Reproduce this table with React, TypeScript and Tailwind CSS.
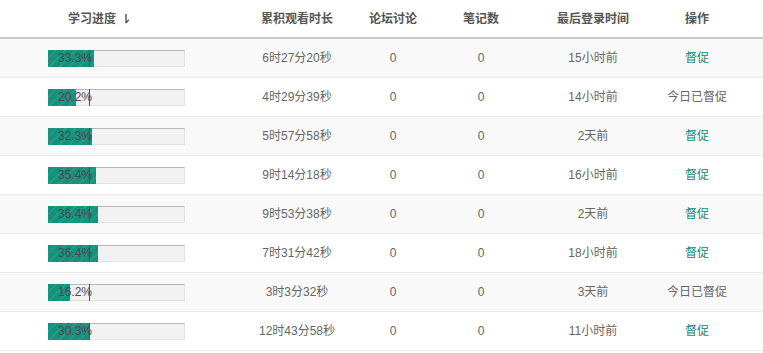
import React from "react";

const rows = [
  { p: 33.3, t: "6时27分20秒", f: "0", n: "0", l: "15小时前", done: false },
  { p: 20.2, t: "4时29分39秒", f: "0", n: "0", l: "14小时前", done: true },
  { p: 32.3, t: "5时57分58秒", f: "0", n: "0", l: "2天前", done: false },
  { p: 35.4, t: "9时14分18秒", f: "0", n: "0", l: "16小时前", done: false },
  { p: 36.4, t: "9时53分38秒", f: "0", n: "0", l: "2天前", done: false },
  { p: 36.4, t: "7时31分42秒", f: "0", n: "0", l: "18小时前", done: false },
  { p: 16.2, t: "3时3分32秒", f: "0", n: "0", l: "3天前", done: true },
  { p: 30.3, t: "12时43分58秒", f: "0", n: "0", l: "11小时前", done: false },
];

const grid = "grid grid-cols-[233px_128px_64px_112px_112px_96px] pr-[18px]";

function Bar({ p }: { p: number }) {
  return (
    <div className="relative w-[137px] h-[17px]">
      <div className="absolute inset-0 bg-[#f2f2f2] border border-[#e2e2e2] border-t-[#b8b8b8]" />
      <div
        className="absolute top-0 left-0 h-full bg-[repeating-linear-gradient(135deg,#17917c_0px,#17917c_5px,#1f9c86_5px,#1f9c86_7px)]"
        style={{ width: `${p}%` }}
      />
      <div className="absolute inset-y-0 left-[10px] flex items-center text-[12px] leading-none text-[#4a4a4a]">
        {p.toFixed(1)}%
      </div>
      <div className="absolute top-0 h-full w-px bg-[#e8101a] left-[41px]" />
    </div>
  );
}

export default function App() {
  return (
    <div
      className="w-[763px] h-[353px] bg-white text-[12px] text-[#666]"
      style={{ fontFamily: '"Liberation Sans", "Noto Sans CJK SC", sans-serif' }}
    >
      <div className={`${grid} h-[39px] border-b-2 border-[#cbcbcb] font-semibold text-[#555]`}>
        <div className="flex items-center pl-[68px]">
          <span>学习进度</span>
          <svg className="ml-[8px]" width="6" height="11" viewBox="0 0 6 11">
            <path d="M2 1V10M2 10L4.8 6.8" stroke="#555" strokeWidth="1.4" fill="none" />
          </svg>
        </div>
        <div className="flex items-center justify-center">累积观看时长</div>
        <div className="flex items-center justify-center">论坛讨论</div>
        <div className="flex items-center justify-center">笔记数</div>
        <div className="flex items-center justify-center">最后登录时间</div>
        <div className="flex items-center justify-center">操作</div>
      </div>
      {rows.map((r, i) => (
        <div
          key={i}
          className={`${grid} h-[39px] border-b border-[#ebebeb] ${i % 2 === 0 ? "bg-[#f9f9f9]" : "bg-white"}`}
        >
          <div className="flex items-center justify-center">
            <Bar p={r.p} />
          </div>
          <div className="flex items-center justify-center">{r.t}</div>
          <div className="flex items-center justify-center">{r.f}</div>
          <div className="flex items-center justify-center">{r.n}</div>
          <div className="flex items-center justify-center">{r.l}</div>
          <div className={`flex items-center justify-center ${r.done ? "text-[#666]" : "text-[#12897a]"}`}>
            {r.done ? "今日已督促" : "督促"}
          </div>
        </div>
      ))}
    </div>
  );
}
